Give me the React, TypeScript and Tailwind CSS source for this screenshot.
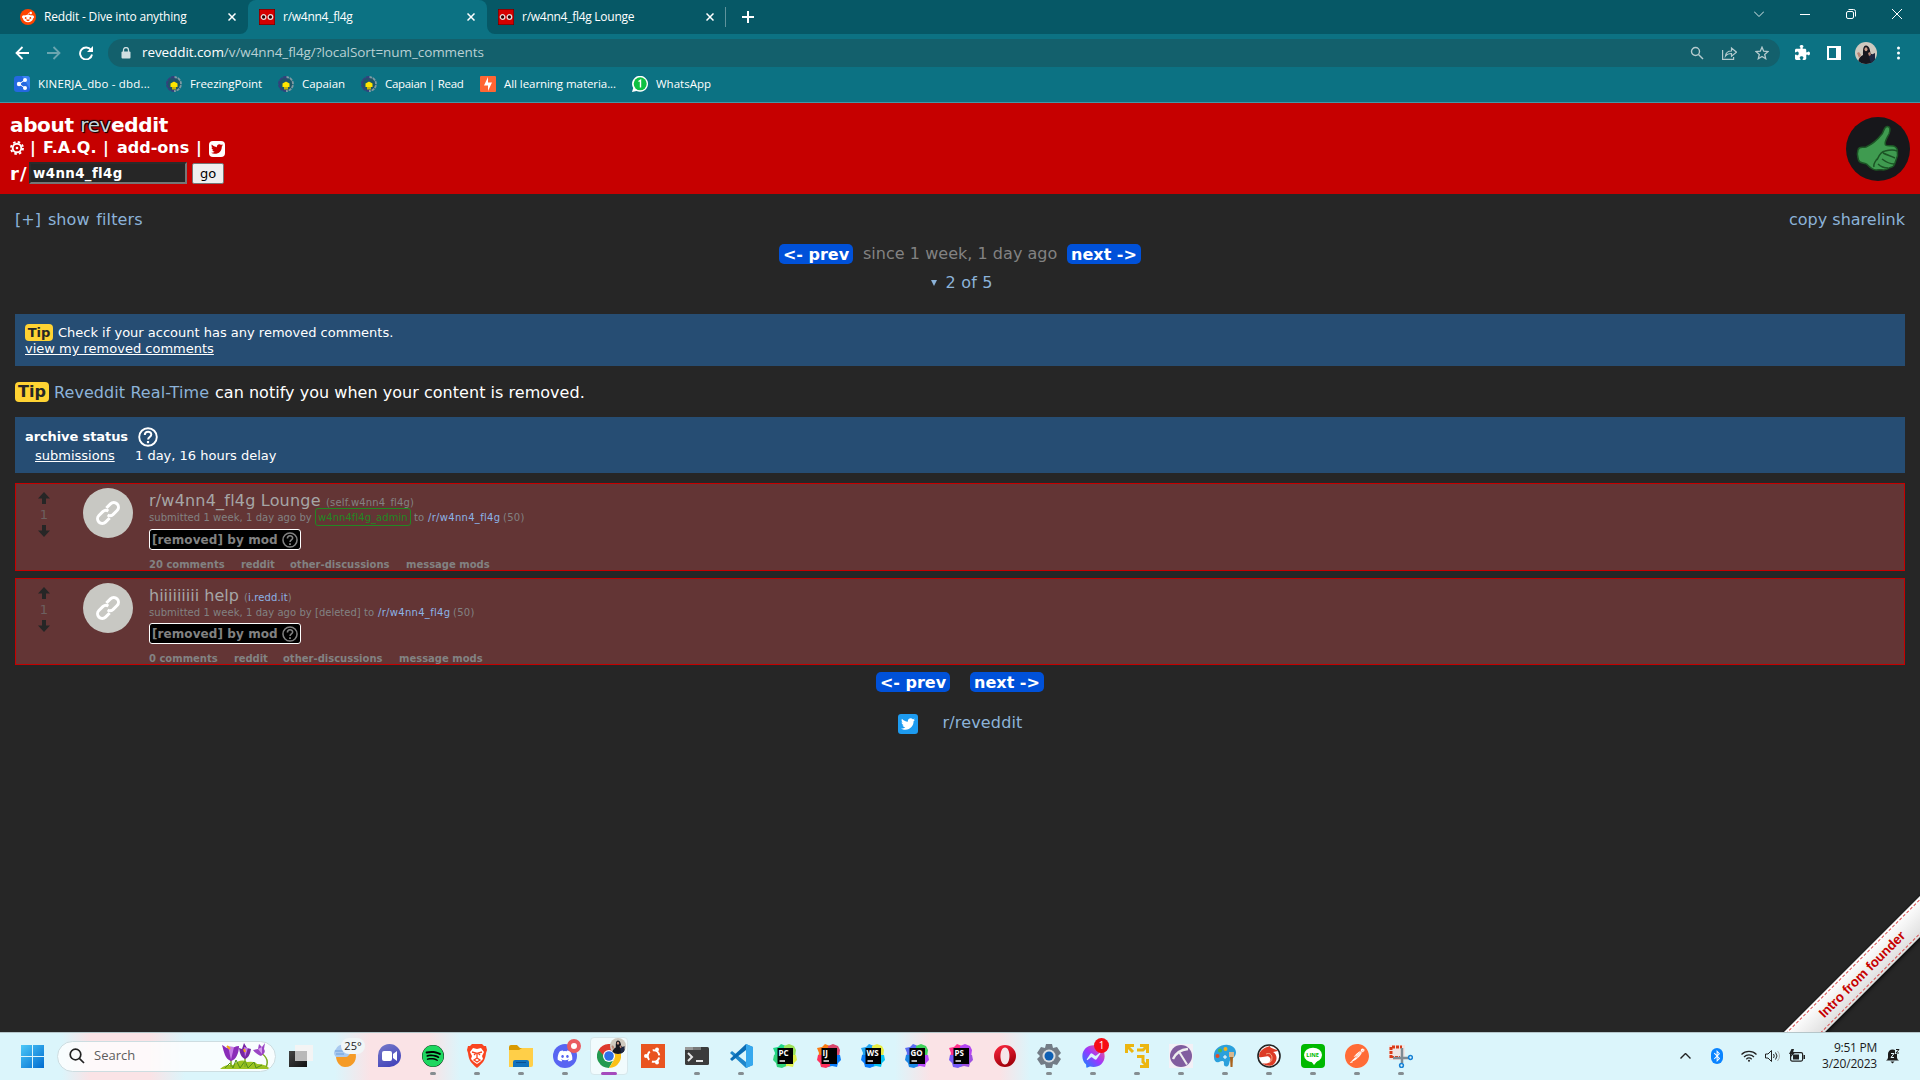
import React from "react";
import { FaRedditAlien, FaTwitter, FaSpotify, FaDiscord, FaFacebookMessenger, FaBluetoothB, FaPuzzlePiece } from "react-icons/fa6";
import { SiPostman } from "react-icons/si";

function Avatar({ className }: { className: string }) {
  return (
    <svg className={className} viewBox="0 0 22 22">
      <defs><clipPath id="av"><circle cx="11" cy="11" r="11" /></clipPath></defs>
      <g clipPath="url(#av)">
        <rect width="22" height="22" fill="#cfc9bf" />
        <path d="M3 22c0-6 3-8 5-9 0-6 0-9 3-9.500 3 .5 4 3 4.500 8 3 1 5 4 5 10.500z" fill="#17171f" />
        <path d="M14 14l6-3v8l-4 3z" fill="#1d2742" />
        <ellipse cx="11" cy="7.300" rx="1.500" ry="2" fill="#c99a86" />
        <path d="M2 11l2-1 2 3-2 3zM13 11l2-1 1 3-2 1z" fill="#b98676" />
      </g>
    </svg>
  );
}

function Goggles() {
  return (
    <svg className="h-4 w-4 shrink-0" viewBox="0 0 16 16">
      <rect width="16" height="16" fill="#4a0508" />
      <rect x=".5" y=".5" width="15" height="15" fill="#d40000" />
      <circle cx="4.600" cy="8" r="2.300" fill="#300" stroke="#e9dcdc" strokeWidth="1.300" />
      <circle cx="11.400" cy="8" r="2.300" fill="#300" stroke="#e9dcdc" strokeWidth="1.300" />
    </svg>
  );
}

function Close() {
  return (
    <svg className="h-2 w-2 shrink-0" viewBox="0 0 8 8" stroke="#fff" strokeWidth="1.500">
      <path d="M.5.5l7 7M7.500.5l-7 7" />
    </svg>
  );
}

function Tabs() {
  return (
    <div className="flex h-[34px] w-full bg-[#065866] font-['Open_Sans',sans-serif] text-[12px] text-white">
      <div className="flex w-[248px] items-center pl-5">
        <div className="flex h-4 w-4 items-center justify-center rounded-full bg-[#ff4500]"><FaRedditAlien className="h-3 w-3" /></div>
        <span className="ml-2 w-[184px] whitespace-nowrap tracking-[-0.18px]">Reddit - Dive into anything</span>
        <Close />
      </div>
      <div className="relative flex w-[239px] items-center rounded-t-lg bg-[#0c7283] pl-[11px]">
        <svg className="absolute -left-2 bottom-0 h-2 w-2" viewBox="0 0 8 8"><path d="M8 0v8H0a8 8 0 0 0 8-8" fill="#0c7283" /></svg>
        <svg className="absolute -right-2 bottom-0 h-2 w-2" viewBox="0 0 8 8"><path d="M0 0v8h8a8 8 0 0 1-8-8" fill="#0c7283" /></svg>
        <Goggles />
        <span className="ml-2 w-[184px] whitespace-nowrap tracking-[-0.27px]">r/w4nn4_fl4g</span>
        <Close />
      </div>
      <div className="flex w-[238px] items-center pl-[11px]">
        <Goggles />
        <span className="ml-2 w-[184px] whitespace-nowrap tracking-[-0.27px]">r/w4nn4_fl4g Lounge</span>
        <Close />
      </div>
      <div className="mt-[7px] h-5 w-px bg-[#5f939c]" />
      <svg className="ml-4 mt-[11px] h-3 w-3" viewBox="0 0 12 12" stroke="#fff" strokeWidth="2"><path d="M6 0v12M0 6h12" /></svg>
      <div className="ml-auto mr-[18px] mt-[8px] flex h-3 items-center gap-9">
        <svg className="h-3 w-[10px]" viewBox="0 0 10 12" fill="none" stroke="#d8e6e8"><path d="M0 3.500l5 5 5-5" /></svg>
        <svg className="h-3 w-[10px]" viewBox="0 0 10 12" stroke="#fff"><path d="M0 6.500h10" /></svg>
        <svg className="h-3 w-[10px]" viewBox="0 0 10 12" fill="none" stroke="#fff"><rect x=".5" y="3.500" width="7" height="7" rx="1.500" /><path d="M2.500 1.500h5a2 2 0 0 1 2 2v5" /></svg>
        <svg className="h-3 w-[10px]" viewBox="0 0 10 12" stroke="#fff"><path d="M0 1l10 10M10 1L0 11" /></svg>
      </div>
    </div>
  );
}

function Toolbar() {
  return (
    <div className="flex h-[37px] items-center bg-[#0c7283] pl-[15px] font-['Open_Sans',sans-serif]">
      <svg className="h-[14px] w-[14px]" viewBox="0 0 14 14" fill="none" stroke="#fff" strokeWidth="1.800"><path d="M14 7H1.500M7.500 1L1.500 7l6 6" /></svg>
      <svg className="ml-[18px] h-[14px] w-[14px]" viewBox="0 0 14 14" fill="none" stroke="#6ba6b0" strokeWidth="1.800"><path d="M0 7h12.500M6.500 1l6 6-6 6" /></svg>
      <svg className="ml-[18px] h-[14px] w-[14px]" viewBox="0 0 14 14" fill="none" stroke="#fff" strokeWidth="1.900"><path d="M12 4A6 6 0 1 0 13 8.500" /><path d="M14 0v6H8z" fill="#fff" stroke="none" /></svg>
      <div className="ml-[15px] flex h-7 w-[1672px] items-center rounded-full bg-[#13606c] pl-[13px]">
        <svg className="h-3 w-[10px]" viewBox="0 0 10 12"><rect x=".5" y="4.500" width="9" height="7" rx="1" fill="#cfdfe1" /><path d="M2.500 5V3a2.500 2.500 0 0 1 5 0v2" fill="none" stroke="#cfdfe1" strokeWidth="1.300" /></svg>
        <span className="ml-[11px] w-[342px] whitespace-nowrap text-[13.500px] tracking-[-0.08px] text-[#b9d0d4]"><span className="text-white">reveddit.com</span>/v/w4nn4_fl4g/?localSort=num_comments</span>
        <div className="ml-auto mr-[11px] flex items-center gap-[18px]">
          <svg className="h-[14px] w-[14px]" viewBox="0 0 14 14" fill="none" stroke="#b5cbce" strokeWidth="1.400"><circle cx="5.500" cy="5.500" r="4" /><path d="M8.500 8.500l4.500 4.500" /></svg>
          <svg className="h-[14px] w-[15px]" viewBox="0 0 15 14" fill="none" stroke="#b5cbce" strokeWidth="1.200"><path d="M.6 4v9.400h11V11" /><path d="M3.500 10c.5-4 3-5 6-5V2l5 4.200-5 4V7.500c-3 0-4.500.5-6 2.500z" /></svg>
          <svg className="h-[14px] w-[14px]" viewBox="0 0 14 14" fill="none" stroke="#b5cbce" strokeWidth="1.300"><path d="M7 1.200l1.700 4 4.300.4-3.300 2.800 1 4.300L7 10.500l-3.700 2.200 1-4.300L1 5.600l4.300-.4z" /></svg>
        </div>
      </div>
      <FaPuzzlePiece className="ml-[15px] h-[15px] w-[15px] text-white" />
      <div className="ml-[17px] h-[14px] w-[14px] border-2 border-r-[5px] border-white" />
      <Avatar className="ml-[14px] h-[22px] w-[22px]" />
      <svg className="ml-5 h-[14px] w-[3px]" viewBox="0 0 3 14" fill="#fff"><circle cx="1.500" cy="2" r="1.500" /><circle cx="1.500" cy="7" r="1.500" /><circle cx="1.500" cy="12" r="1.500" /></svg>
    </div>
  );
}

function Emblem() {
  return (
    <svg className="h-4 w-4 shrink-0" viewBox="0 0 16 16" fill="none">
      <circle cx="8" cy="8" r="7" fill="#1d5566" />
      <path d="M8 1a7 7 0 0 0 0 14" stroke="#35407c" strokeWidth="2" strokeDasharray="3.200 .6" />
      <path d="M8 1a7 7 0 0 1 0 14" stroke="#7f9aa3" strokeWidth="1.800" strokeDasharray="3.200 .8" />
      <path d="M4.500 7.500l3.500-2 3.500 2v3.500H4.500z" fill="#ffe600" />
      <path d="M6 11h4v2.500H6z" fill="#c9b20a" />
      <path d="M8 0v5.500" stroke="#35407c" />
    </svg>
  );
}

function Bookmarks() {
  return (
    <div className="flex h-[32px] items-center border-b border-[#4596a3] bg-[#0c7283] pb-[5px] pl-[14px] font-['Open_Sans',sans-serif] text-[11.500px] text-white">
      <div className="mr-4 flex items-center gap-2">
        <svg className="h-4 w-4" viewBox="0 0 16 16"><rect width="16" height="16" rx="3" fill="#2468e0" /><path d="M8 0h5a3 3 0 0 1 3 3v10z" fill="#3b82f2" /><path d="M11 4L5 8l6 4" stroke="#fff" fill="none" /><g fill="#fff"><circle cx="11" cy="4" r="2" /><circle cx="5" cy="8" r="2.200" /><circle cx="11" cy="12" r="2" /></g></svg>
        <span className="w-[112px] whitespace-nowrap tracking-[0.17px]">KINERJA_dbo - dbd...</span>
      </div>
      <div className="mr-4 flex items-center gap-2"><Emblem /><span className="w-[72px] whitespace-nowrap tracking-[-0.08px]">FreezingPoint</span></div>
      <div className="mr-4 flex items-center gap-2"><Emblem /><span className="w-[43px] whitespace-nowrap tracking-[-0.06px]">Capaian</span></div>
      <div className="mr-4 flex items-center gap-2"><Emblem /><span className="w-[79px] whitespace-nowrap tracking-[-0.3px]">Capaian | Read</span></div>
      <div className="mr-4 flex items-center gap-2">
        <svg className="h-4 w-4" viewBox="0 0 16 16"><rect width="16" height="16" rx="1" fill="#ff6633" /><path d="M8 1v5.500h4L8 15V9.500H4z" fill="#fff" /></svg>
        <span className="w-[112px] whitespace-nowrap tracking-[-0.06px]">All learning materia...</span>
      </div>
      <div className="flex items-center gap-2">
        <svg className="h-4 w-4" viewBox="0 0 16 16"><path d="M0 16l1.200-4A8 8 0 1 1 4.500 15z" fill="#fff" /><circle cx="8.200" cy="7.800" r="6.500" fill="#0fc143" /><path d="M6.500 5.500l2-1.300v7.300" stroke="#fff" strokeWidth="1.400" fill="none" /></svg>
        <span className="w-[55px] whitespace-nowrap">WhatsApp</span>
      </div>
    </div>
  );
}

function SiteHeader() {
  return (
    <header className="flex h-[91px] items-center justify-between bg-[#c60000] pl-[10px] pr-[10px] font-bold text-white">
      <div className="flex h-full flex-col pt-[9px]">
        <div className="flex h-[25px] items-center text-[20px]">
          <span className="w-[158px] whitespace-nowrap tracking-[-0.35px]">about <span className="font-normal text-[#c6d8dc] [text-shadow:1px_1px_1px_#000,-1px_-1px_1px_#000,1px_-1px_1px_#300]">rev</span>eddit</span>
        </div>
        <div className="flex h-[21px] items-center text-[16px]">
          <svg className="h-[14px] w-[14px]" viewBox="0 0 14 14" fill="none" stroke="#fff"><circle cx="7" cy="7" r="4.300" strokeWidth="1.900" /><circle cx="7" cy="7" r="6" strokeWidth="1.900" strokeDasharray="2.500 2.212" /><circle cx="7" cy="7" r="1.300" fill="#fff" stroke="none" /></svg>
          <span className="ml-[6px] w-[6px]">|</span>
          <span className="ml-[7px] w-[52px] whitespace-nowrap tracking-[0.1px]">F.A.Q.</span>
          <span className="ml-[8px] w-[6px]">|</span>
          <span className="ml-[8px] w-[72px] whitespace-nowrap">add-ons</span>
          <span className="ml-[7px] w-[6px]">|</span>
          <span className="ml-[7px] mt-[2px] flex h-4 w-4 items-center justify-center rounded-sm bg-white"><FaTwitter className="h-3 w-3 text-[#c60000]" /></span>
        </div>
        <div className="mt-[4px] flex h-[22px] items-center">
          <span className="w-[19px] whitespace-nowrap pt-px text-[18px] tracking-[1px]">r/</span>
          <div className="flex h-[22px] w-[158px] items-center border-2 border-b-[#767676] border-l-[#2b2b2b] border-r-[#767676] border-t-[#2b2b2b] bg-[#262626] pl-[2px] text-[13.333px]"><span className="w-[89px] whitespace-nowrap pt-px tracking-[0.4px]">w4nn4_fl4g</span></div>
          <button className="ml-[5px] h-[21px] w-8 rounded-[2px] border border-[#767676] bg-[#efefef] text-[13px] font-normal leading-[19px] text-black">go</button>
        </div>
      </div>
      <svg className="h-16 w-16" viewBox="0 0 64 64">
        <circle cx="32" cy="32" r="32" fill="#17171b" />
        <path d="M12 33c1-4 4-2 8-3 7-3 12-8 16-13 2-3 2-7 5-7.500 3.500-.5 3.500 4 2 7.500-2 4-5 8-3.500 11 3 2 7-.5 10 2 3 2 1.500 5 2 7s-1 4-1.500 6-1 4-2.500 6c-2 2-4 1-6 3-3 2-7 0-11 1-4 .5-7-3-10-6-3-2-7 0-8-4s-2-6-.5-10z" fill="#3f9b50" stroke="#1c5425" strokeWidth="1.500" />
        <path d="M51 34c-4-2-8-1-12 0-5 1-6 5-8 9M49 41c-4-2-8-3-12-5M48 47c-5 0-8-2-12-5M42 51c-4 0-8-2-10-4M28 50c-1-3 1-5 3-8" fill="none" stroke="#1c5425" strokeWidth="1.500" />
      </svg>
    </header>
  );
}

function Help({ className }: { className: string }) {
  return (
    <svg className={className} viewBox="0 0 20 20" fill="none" stroke="currentColor">
      <circle cx="10" cy="10" r="8.800" strokeWidth="1.900" />
      <path d="M6.800 8c0-4.300 6.500-4.200 6.500-.5 0 2.500-3.200 2.400-3.200 5" strokeWidth="2" />
      <path d="M10 14v2.200" strokeWidth="2.200" />
    </svg>
  );
}

function Arrow({ className }: { className: string }) {
  return <svg className={className} viewBox="0 0 12 12"><path d="M6 0l6 6.500H8V12H4V6.500H0z" fill="#262626" /></svg>;
}

function NavButton({ children }: { children: React.ReactNode }) {
  return <span className="flex h-5 w-[74px] items-center justify-center whitespace-nowrap rounded-[5px] bg-[#0051d9] pt-px font-bold text-white">{children}</span>;
}

type PostProps = { title: React.ReactNode; domain: React.ReactNode; author: React.ReactNode; comments: React.ReactNode; box: string; links: string; gap: string };

function Post({ title, domain, author, comments, box, links, gap }: PostProps) {
  return (
    <article className={`flex border border-[#c60000] bg-[#633535] text-[#828282] ${box}`}>
      <div className="flex w-[56px] flex-col items-center pt-[8px]">
        <Arrow className="h-3 w-3" />
        <span className="flex h-[21px] items-center text-[13px] text-[#6d6060]">1</span>
        <Arrow className="h-3 w-3 rotate-180" />
      </div>
      <div className="ml-[11px] mt-1 flex h-[50px] w-[50px] items-center justify-center rounded-full bg-[#c8c8c3]">
        <svg className="h-7 w-7" viewBox="0 0 24 24" fill="none" stroke="#fff" strokeWidth="2.600"><g transform="rotate(-45 12 12)"><path d="M14 8H19a4 4 0 0 1 0 8H14a4 4 0 0 1-3.500-3" /><path d="M10 16H5a4 4 0 0 1 0-8H10a4 4 0 0 1 3.500 3" /></g></svg>
      </div>
      <div className="ml-4 flex flex-col text-[10px]">
        <div className="mt-[6px] flex h-[22px] items-baseline text-[16px] leading-[22px] text-[#a6a6a6]">{title}<span className="ml-[5px] text-[10px] text-[#828282]">{domain}</span></div>
        <div className="-mt-[4px] flex h-[18px] items-center whitespace-nowrap">
          <span className="w-[163px] pt-px tracking-[0.05px]">submitted 1 week, 1 day ago by</span>{author}
          <span className="ml-[3px] w-[10px] pt-px">to</span>
          <span className="ml-[4px] w-[72px] pt-px tracking-[0.3px] text-[#8cb3e6]">/r/w4nn4_fl4g</span>
          <span className="ml-[3px] w-[22px] pt-px tracking-[0.3px]">(50)</span>
        </div>
        <div className={`flex w-[152px] items-center rounded-[3px] border border-white bg-black pl-[2px] text-[12px] font-bold ${gap}`}>
          <span className="w-[126px] whitespace-nowrap tracking-[0.08px]">[removed] by mod</span><Help className="ml-1 mt-px h-4 w-4" />
        </div>
        <div className={`flex h-3 items-center whitespace-nowrap font-bold ${links}`}>
          {comments}
          <span className="ml-4 w-[33px] tracking-[-0.1px]">reddit</span>
          <span className="ml-4 w-[100px]">other-discussions</span>
          <span className="ml-4 w-[83px]">message mods</span>
        </div>
      </div>
    </article>
  );
}

function Page() {
  return (
    <main className="flex h-[838px] flex-col overflow-hidden bg-[#262626] px-[15px] text-[16px] text-[#8cb3d9]">
      <div className="flex h-[50px] items-center justify-between whitespace-nowrap pt-[2px]">
        <span className="w-[126px] tracking-[0.1px] [word-spacing:1.500px]">[+] show filters</span><span className="w-[116px]">copy sharelink</span>
      </div>
      <div className="flex h-5 items-center justify-center gap-[10px]">
        <NavButton>&lt;- prev</NavButton><span className="w-[194px] whitespace-nowrap tracking-[0.03px] text-[#828282]">since 1 week, 1 day ago</span><NavButton>next -&gt;</NavButton>
      </div>
      <div className="flex h-9 items-center justify-center pl-[4px] pt-px">
        <svg className="mr-[9px] h-[6px] w-[6px]" viewBox="0 0 6 6"><path d="M0 0h6L3 6z" fill="#8cb3d9" /></svg><span className="w-[48px] whitespace-nowrap tracking-[0.2px]">2 of 5</span>
      </div>
      <section className="mt-[14px] h-[52px] bg-[#264d73] px-[10px] pt-[10px] text-[13px] text-white">
        <div className="flex h-[17px] items-center"><span className="flex h-[17px] w-7 items-center justify-center rounded bg-[#ffd333] text-[13px] font-bold text-[#262626]">Tip</span><span className="ml-[5px] w-[335px] whitespace-nowrap">Check if your account has any removed comments.</span></div>
        <div className="flex h-4 items-center"><span className="w-[188px] whitespace-nowrap underline">view my removed comments</span></div>
      </section>
      <div className="flex h-[51px] items-center whitespace-nowrap">
        <span className="flex h-5 w-[34px] items-center justify-center rounded bg-[#ffd333] pt-px font-bold text-[#262626]">Tip</span>
        <span className="ml-[5px] w-[155px] pt-[2px] tracking-[0.08px]">Reveddit Real-Time</span><span className="ml-[6px] w-[370px] pt-[2px] tracking-[0.03px] text-white">can notify you when your content is removed.</span>
      </div>
      <section className="h-[56px] bg-[#264d73] px-[10px] pt-[9px] text-[13px] text-white">
        <div className="flex h-5 items-center"><span className="w-[103px] whitespace-nowrap pt-px font-bold tracking-[-0.1px]">archive status</span><Help className="ml-[10px] mt-px h-5 w-5" /></div>
        <div className="flex h-[19px] items-center whitespace-nowrap pl-[10px]"><span className="w-[80px] underline">submissions</span><span className="ml-5 w-[141px]">1 day, 16 hours delay</span></div>
      </section>
      <div className="mt-[10px] flex flex-col gap-[7px]">
        <Post box="h-[88px]" gap="mt-[3px] h-[23px]" links="mt-[8px]"
          title={<span className="w-[172px] whitespace-nowrap tracking-[0.2px]">r/w4nn4_fl4g Lounge</span>}
          domain={<span className="inline-block w-[88px] whitespace-nowrap tracking-[0.15px]">(self.w4nn4_fl4g)</span>}
          author={<span className="ml-[3px] flex h-[18px] w-[96px] items-center rounded-[3px] border border-[#228822] pl-[2px] text-[#228822]"><span className="w-[90px] tracking-[0.05px]">w4nn4fl4g_admin</span></span>}
          comments={<span className="w-[76px]">20 comments</span>} />
        <Post box="h-[87px]" gap="mt-[3px] h-[22px]" links="mt-[8px]"
          title={<span className="w-[90px] whitespace-nowrap">hiiiiiiiii help</span>}
          domain={<span className="inline-block w-[48px] whitespace-nowrap tracking-[0.12px]">(<span className="text-[#8cb3e6]">i.redd.it</span>)</span>}
          author={<span className="ml-[3px] w-[46px] pt-px">[deleted]</span>}
          comments={<span className="w-[69px]">0 comments</span>} />
      </div>
      <div className="mt-[7px] flex h-5 justify-center gap-5"><NavButton>&lt;- prev</NavButton><NavButton>next -&gt;</NavButton></div>
      <div className="mt-[22px] flex h-5 items-center justify-center">
        <span className="flex h-5 w-5 items-center justify-center rounded-[3px] bg-[#1d9bf0]"><FaTwitter className="h-[14px] w-[14px] text-white" /></span>
        <span className="mb-[2px] ml-[25px] w-[80px] whitespace-nowrap tracking-[0.16px]">r/reveddit</span>
      </div>
    </main>
  );
}

function Slot({ children, dot }: { children: React.ReactNode; dot?: boolean }) {
  return (
    <div className="relative flex h-12 w-11 shrink-0 items-center justify-center">
      {children}
      {dot && <span className="absolute bottom-[5px] h-[3px] w-[6px] rounded-full bg-[#858d91]" />}
    </div>
  );
}

function Jet({ label, a, b, c, d }: { label: string; a: string; b: string; c: string; d: string }) {
  return (
    <svg className="h-6 w-6" viewBox="0 0 24 24">
      <path d="M0 4l5-1 3-3 5 2v11H1l1-4z" fill={a} />
      <path d="M11 2l5-2 5 2 2 4-1 7H11z" fill={b} />
      <path d="M11 11h12l1 5-3 3-1 4-5-1-4 1z" fill={c} />
      <path d="M1 11h12v11l-4 2-5-1-1-4-3-3z" fill={d} />
      <rect x="4.500" y="4" width="15.500" height="16" fill="#000" />
      <text x="5.500" y="11.500" fontSize="8" fontWeight="bold" fill="#fff" fontFamily="Open Sans, sans-serif">{label}</text>
      <path d="M6.500 17h5.500" stroke="#fff" strokeWidth="1.400" />
    </svg>
  );
}

function Taskbar() {
  return (
    <footer className="flex h-12 items-center border-t border-[#b5c6ca] bg-[linear-gradient(90deg,#dbf5fb_0,#dbf5fb_62px,#fae3e6_90px,#fae3e6_150px,#dbf5fb_185px,#dbf5fb_335px,#fae3e6_370px,#fae3e6_430px,#dbf5fb_460px,#dbf5fb_895px,#fae3e6_930px,#fae3e6_1000px,#dbf5fb_1030px)] pl-[21px] font-['Open_Sans',sans-serif] text-[#1b1b1b]">
      <svg className="h-[23px] w-[23px] shrink-0" viewBox="0 0 23 23"><defs><linearGradient id="win" x2="1" y2="1"><stop stopColor="#4cc8f8" /><stop offset="1" stopColor="#006cd0" /></linearGradient></defs><path d="M0 0h11v11H0zM12 0h11v11H12zM0 12h11v11H0zM12 12h11v11H12z" fill="url(#win)" /></svg>
      <div className="mb-px ml-[13px] flex h-[31px] w-[219px] shrink-0 items-center overflow-hidden rounded-full border border-[#cddde1] bg-white/80 pl-[11px]">
        <svg className="h-4 w-4" viewBox="0 0 16 16" fill="none" stroke="#222" strokeWidth="1.700"><circle cx="6.500" cy="6.500" r="5.300" /><path d="M10.300 10.300l4.700 4.700" /></svg>
        <span className="ml-[9px] w-[43px] text-[13px] text-[#5d5d5d]">Search</span>
        <svg className="ml-[83px] h-[28px] w-[50px]" viewBox="0 0 50 28">
          <path d="M0 27q6-5 13-4 8-7 14-3 8-1 10 2 9 0 13 5z" fill="#9bc320" />
          <path d="M5 26l5-5 3 5 3-8 4 8 5-7 3 7 6-6 2 6 6-3" stroke="#4f8f1b" fill="none" />
          <path d="M11 14v11M25 14v11M41 11q9 6 5 14" stroke="#7cab22" fill="none" strokeWidth="1.500" />
          <path d="M2 3c4 2 6 5 8 2 2 3 4-1 9-1 0 7-3 14-8 15C5 17 4 10 2 3z" fill="#8a2cb8" /><path d="M8 4l3 14 3-13" fill="#c67be6" />
          <path d="M19 6l3 1 2-6 3 5 4 1c-1 6-3 9-6 10-4-2-5-5-6-11z" fill="#7625a5" /><path d="M24 5l1 10 3-9" fill="#c67be6" />
          <path d="M33 8l5-1 1-5 3 3 3-4-1 6c2 3 0 5-3 7-3-1-6-3-8-6z" fill="#9a45c4" /><path d="M38 7l4 5v-7" fill="#d39aec" />
          <path d="M7 4l3 3M24 7l1 3" stroke="#f5a613" strokeWidth="2" />
        </svg>
      </div>
      <div className="mb-px ml-[3px] flex">
        <Slot><svg className="h-6 w-6" viewBox="0 0 24 24"><defs><linearGradient id="tv" x2="1" y2="1"><stop stopColor="#444" /><stop offset="1" stopColor="#111" /></linearGradient></defs><rect x="0" y="7" width="18" height="16" fill="url(#tv)" /><rect x="6" y="1" width="18" height="16" fill="#f4f4f4" /><rect x="6" y="7" width="12" height="10" fill="#b9b9b9" /></svg></Slot>
        <Slot>
          <svg className="h-7 w-8" viewBox="0 0 32 28"><path d="M7 14h9c5 0 6-5 10-5 3 8-1 16-10 16-5 0-9-5-9-11z" fill="#f59b26" /><path d="M7 15a5 5 0 0 1 0-8c3-6 10-5 11 0 4 3 2 8-1 8z" fill="#a9c9ef" /><path d="M7 12h8M6 9h10" stroke="#6d9fdb" /></svg>
          <span className="absolute left-[18px] top-[6px] flex h-4 w-[24px] items-center justify-center rounded-full bg-[#f1f6f7] text-[11px]">25°</span>
        </Slot>
        <Slot><svg className="h-6 w-6" viewBox="0 0 24 24"><defs><linearGradient id="ch" x2=".5" y2="1"><stop stopColor="#777bc9" /><stop offset="1" stopColor="#4546bb" /></linearGradient></defs><path d="M1 23V12A11.500 11.500 0 1 1 12 23z" fill="url(#ch)" /><rect x="5" y="7" width="10" height="10" rx="2" fill="#fff" /><path d="M16 10l4-3v10l-4-3z" fill="#fff" /></svg></Slot>
        <Slot dot><div className="h-[22px] w-[22px] rounded-full bg-black"><FaSpotify className="h-[22px] w-[22px] text-[#1ed760]" /></div></Slot>
        <Slot dot><svg className="h-6 w-6" viewBox="0 0 24 24"><path d="M7 0h10l2 2 2 0 1 4-1 3c-1 7-2 9-9 15C5 18 4 16 3 9L2 6l1-4h2z" fill="#f9441f" /><path d="M8 4l4 1 4-1 3 4-2 4 1 3-3 3-3 2-3-2-3-3 1-3-2-4z" fill="#fff" /><path d="M7 8l4 1-2 2M17 8l-4 1 2 2M12 9v5l-3 2 3 2 3-2-3-2" stroke="#f9441f" fill="none" strokeWidth="1.300" /></svg></Slot>
        <Slot dot><svg className="h-6 w-6" viewBox="0 0 24 24"><path d="M0 3q0-2 2-2h6l3 3h12v6H0z" fill="#d99a00" /><path d="M0 6h10l3-2h11v17q0 2-2 2H0z" fill="#ffcf48" /><path d="M4 23v-5q0-2 2-2h12q2 0 2 2v5z" fill="#1272bd" /><path d="M7 18h10v1H7z" fill="#0b4f90" /></svg></Slot>
        <Slot dot><div className="flex h-6 w-6 items-center justify-center rounded-full bg-[#5865f2]"><FaDiscord className="h-4 w-4 text-white" /></div><span className="absolute right-[6px] top-[7px] h-[14px] w-[14px] rounded-full border-[4px] border-[#ea5b60] bg-white" /></Slot>
        <div className="relative flex h-12 w-11 items-center justify-center">
          <div className="absolute left-[3px] top-[5px] h-[38px] w-[38px] rounded border border-[#d6e7eb] bg-white/60" />
          <svg className="relative h-6 w-6" viewBox="0 0 24 24"><circle cx="12" cy="12" r="12" fill="#fff" /><path d="M12 12L1.600 6A12 12 0 0 1 22.400 6z" fill="#dd3a2e" /><path d="M12 12L1.600 6A12 12 0 0 0 12 24l5-9z" fill="#229a50" /><path d="M12 12L22.400 6A12 12 0 0 1 12 24l5.500-9z" fill="#fbc116" /><path d="M7 12l-5.400-6h20.800v1H12z" fill="#dd3a2e" /><circle cx="12" cy="12" r="6" fill="#fff" /><circle cx="12" cy="12" r="4.800" fill="#2f6fe8" /></svg>
          <Avatar className="absolute right-[5px] top-[6px] h-4 w-4" />
          <span className="absolute bottom-[5px] h-[3px] w-4 rounded-full bg-[#a54bbd]" />
        </div>
        <Slot><div className="flex h-6 w-6 items-center justify-center bg-[#e95420]"><svg className="h-5 w-5" viewBox="0 0 20 20" fill="none" stroke="#fff" strokeWidth="2"><circle cx="10.500" cy="10" r="5.800" strokeDasharray="9 3.150" strokeDashoffset="-1.500" /><g fill="#fff" stroke="none"><circle cx="3" cy="10" r="2" /><circle cx="14" cy="3.500" r="2" /><circle cx="14" cy="16.500" r="2" /></g></svg></div></Slot>
        <Slot dot><svg className="h-6 w-6" viewBox="0 0 24 24"><rect y="3" width="24" height="18" rx="1.500" fill="#3b3b3b" /><path d="M0 3h8v3H0z" fill="#999" /><path d="M8 3h8v3H8z" fill="#777" /><path d="M3 9l4 4-4 4M11 17h7" stroke="#e5e5e5" strokeWidth="2" fill="none" /></svg></Slot>
        <Slot dot><svg className="h-6 w-6" viewBox="0 0 24 24"><path d="M17 0l7 3v18l-7 3L1 9l2-2 14 11z" fill="#1f86ca" /><path d="M17 0L1 15l2 2L17 6z" fill="#0a6cb5" /><path d="M17 0l7 3v18l-7 3z" fill="#36a8ee" /></svg></Slot>
        <Slot><Jet label="PC" a="#21d789" b="#9be25a" c="#dff04c" d="#2fd37c" /></Slot>
        <Slot><Jet label="IJ" a="#f97a12" b="#d9456b" c="#087cfa" d="#fe315d" /></Slot>
        <Slot><Jet label="WS" a="#21a4f2" b="#e8ed46" c="#07c3f2" d="#087cfa" /></Slot>
        <Slot><Jet label="GO" a="#5a6cf2" b="#3fd05c" c="#b74af7" d="#1b87e6" /></Slot>
        <Slot><Jet label="PS" a="#ff318c" b="#b345f1" c="#9c4fe0" d="#765af8" /></Slot>
        <Slot><svg className="h-[22px] w-[22px]" viewBox="0 0 22 22"><defs><linearGradient id="op" x2=".4" y2="1"><stop stopColor="#ff2740" /><stop offset="1" stopColor="#a3020c" /></linearGradient></defs><path fillRule="evenodd" d="M11 0a11 11 0 1 0 0 22 11 11 0 1 0 0-22M11 2.500c6 0 6 17 0 17s-6-17 0-17" fill="url(#op)" /></svg></Slot>
        <Slot dot><svg className="h-6 w-6" viewBox="0 0 24 24"><path d="M9 0h6l1 4 4-1 4 6-3 3 3 3-4 6-4-1-1 4H9l-1-4-4 1-4-6 3-3-3-3 4-6 4 1z" fill="#737c86" /><circle cx="12" cy="12" r="6.500" fill="#d8dde1" /><circle cx="12" cy="12" r="4.500" fill="#0e5fb3" /></svg></Slot>
        <Slot dot><svg className="absolute h-0 w-0"><defs><linearGradient id="ms" x1="0" y1="1" x2="1" y2="0"><stop stopColor="#0a8cff" /><stop offset=".5" stopColor="#9b36ff" /><stop offset="1" stopColor="#ff5d7b" /></linearGradient></defs></svg><FaFacebookMessenger className="h-[23px] w-[23px] fill-[url(#ms)]" /><span className="absolute right-[6px] top-[6px] flex h-[15px] w-[15px] items-center justify-center rounded-full bg-[#f60d16] text-[10px] text-white">1</span></Slot>
        <Slot dot><svg className="h-6 w-6" viewBox="0 0 24 24" fill="none" stroke="#ecb610" strokeWidth="3"><path d="M1.500 9V1.500H9M2 2l6 6M15 1.500h7.500V9M15 22.500h7.500V15M22 22l-4-4" /><path d="M22 2l-4 4h-6M12 12.500h6V19" /></svg></Slot>
        <Slot dot><svg className="h-6 w-6" viewBox="0 0 24 24"><rect width="24" height="24" fill="#f3f0f6" /><circle cx="12" cy="12" r="11" fill="#815d9f" /><path d="M4 15q4-9 15-10" stroke="#eee" strokeWidth="2.400" fill="none" /><path d="M10.500 8.500l7.500 12" stroke="#eee" strokeWidth="2" /></svg></Slot>
        <Slot dot><svg className="h-6 w-6" viewBox="0 0 24 24"><path d="M1 13C0 5 8 0 15 1c9 1 10 10 5 13-4 2-3 3-4 6-1 4-6 3-5-1 0-3-3-2-5-1-3 1-5-1-5-5z" fill="#2ba0dc" /><circle cx="4.500" cy="12" r="2" fill="#e34c26" /><circle cx="7" cy="6.500" r="2" fill="#4cb94a" /><circle cx="12.500" cy="5" r="2" fill="#f4b21a" /><path d="M16 8h5v5h-5z" fill="#d7b890" /><path d="M17 13h3l-.5 10h-2z" fill="#a9631d" /><path d="M12 11v4M10 13h4" stroke="#fff" /></svg></Slot>
        <Slot dot><svg className="h-6 w-6" viewBox="0 0 24 24"><circle cx="12" cy="12" r="11" fill="#fff" stroke="#222" strokeWidth="1.600" /><path d="M2 13c0-7 5-9 11-11 0 3 5 2 8 5-2 0-3 1-5 1 4 2 5 8 1 12-3 3-9 2-12-1 6 2 10-2 8-5-2-4-6 0-11-1z" fill="#dc3b25" /><path d="M9 10q5-2 6 3 1 4-3 6" stroke="#f4a582" fill="none" /></svg></Slot>
        <Slot dot><div className="flex h-6 w-6 items-center justify-center rounded-[4px] bg-[#00b900]"><svg className="h-5 w-5" viewBox="0 0 20 20"><ellipse cx="10" cy="9" rx="9" ry="7.300" fill="#fff" /><path d="M8 15l3 4 4-5z" fill="#fff" /><text x="3.300" y="11" fontSize="5.600" fontWeight="bold" fill="#00b900" fontFamily="Open Sans, sans-serif">LINE</text></svg></div></Slot>
        <Slot dot><div className="h-6 w-6 rounded-full bg-white"><SiPostman className="h-6 w-6 text-[#ff6c37]" /></div></Slot>
        <Slot dot><svg className="h-6 w-6" viewBox="0 0 24 24" fill="none"><rect x="0" y="1" width="16" height="15" fill="#eee5e3" /><path d="M2 14V3h11" stroke="#da3b18" strokeWidth="3" strokeDasharray="3 1" /><path d="M2 13h9" stroke="#da3b18" strokeWidth="2" strokeDasharray="3 1" /><path d="M13 4v15M4 14h15" stroke="#7f8b93" strokeWidth="2.500" /><circle cx="21.500" cy="13.500" r="1.900" stroke="#1680d5" strokeWidth="1.500" /><circle cx="12.500" cy="21.500" r="1.900" stroke="#1680d5" strokeWidth="1.500" /></svg></Slot>
      </div>
      <div className="mb-px ml-auto mr-5 flex items-center">
        <svg className="h-[6px] w-[11px]" viewBox="0 0 11 6" fill="none" stroke="#222" strokeWidth="1.400"><path d="M.5 5.500l5-5 5 5" /></svg>
        <span className="ml-5 flex h-4 w-3 items-center justify-center rounded-[6px] bg-[#0a84ff]"><FaBluetoothB className="h-3 w-2 text-white" /></span>
        <svg className="ml-[18px] h-3 w-4" viewBox="0 0 16 12" fill="none" stroke="#222" strokeWidth="1.200"><path d="M.5 4.500a10.500 10.500 0 0 1 15 0M3 7a7 7 0 0 1 10 0M5.300 9.200a4 4 0 0 1 5.400 0" /><circle cx="8" cy="10.800" r="1" fill="#222" stroke="none" /></svg>
        <svg className="ml-2 h-3 w-4" viewBox="0 0 16 12" fill="none" stroke="#222"><path d="M.5 4h2.500l3.500-3.500v11L3 8H.5zM8.500 4q1.500 2 0 4M10.500 2.500q3 3.500 0 7" /><path d="M12.500 1q4 5 0 10" stroke="#aaa" /></svg>
        <svg className="ml-2 h-[14px] w-4" viewBox="0 0 16 14"><rect x="1.600" y="3.600" width="12" height="8.500" rx="1.500" fill="none" stroke="#222" strokeWidth="1.200" /><path d="M4 5.500h6v5H4z" fill="#222" /><path d="M14.500 6h1.500v4h-1.500z" fill="#222" /><path d="M2.500 0L0 5h2.500L1 9l5-5.500H4L5 0z" fill="#222" /></svg>
        <div className="ml-[17px] flex w-[55px] flex-col items-end whitespace-nowrap text-[12px] leading-4"><span className="w-[43px] tracking-[-0.28px]">9:51 PM</span><span className="w-[55px] tracking-[-0.2px]">3/20/2023</span></div>
        <svg className="ml-[9px] h-4 w-[14px]" viewBox="0 0 14 16"><path d="M0 12.500q2-1 2-3V6a4.500 4.500 0 0 1 9 0v3.500q0 2 2 3z" fill="#1b1b1b" /><path d="M4.500 13.500h4l-2 2z" fill="#1b1b1b" /><path d="M5 5.500h3l-3 4h3" stroke="#dff4fa" fill="none" /><path d="M9 0h5v6H9z" fill="#dbf5fb" /><path d="M10 1.500h3L10 5h3" stroke="#1b1b1b" fill="none" /></svg>
      </div>
    </footer>
  );
}

function Ribbon() {
  return (
    <div className="pointer-events-none absolute left-[1720px] top-[832px] h-[200px] w-[200px] overflow-hidden">
      <div className="absolute left-[-9px] top-[129px] flex h-[29px] w-[300px] -rotate-45 items-center justify-center bg-[linear-gradient(#fff,#dedede)] shadow-[0_1px_4px_#000]">
        <span className="flex h-[25px] w-full items-center justify-center border-y border-dashed border-[#dc5050] pl-[3px] font-['Liberation_Sans',sans-serif] text-[13.300px] font-bold text-[#c60000]">Intro from founder</span>
      </div>
    </div>
  );
}

export default function App() {
  return (
    <div className="relative flex h-[1080px] w-[1920px] flex-col overflow-hidden bg-[#262626] font-['DejaVu_Sans',sans-serif]">
      <Tabs /><Toolbar /><Bookmarks /><SiteHeader /><Page /><Taskbar /><Ribbon />
    </div>
  );
}
